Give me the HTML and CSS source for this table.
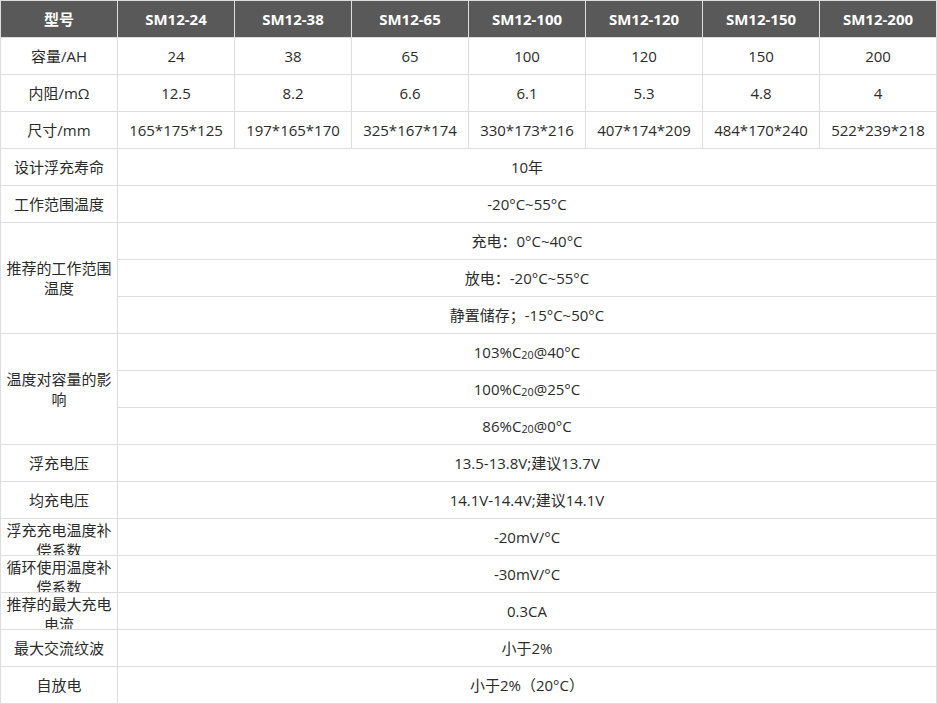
FILE: index.html
```html
<!DOCTYPE html>
<html lang="zh-CN">
<head>
<meta charset="utf-8">
<title>SM12 参数表</title>
<link rel="stylesheet" href="styles.css">
</head>
<body>
<table class="spec">
  <colgroup>
    <col class="c"><col class="c"><col class="c"><col class="c"><col class="c"><col class="c"><col class="c"><col class="c">
  </colgroup>
  <thead>
    <tr class="head">
      <th>型号</th><th>SM12-24</th><th>SM12-38</th><th>SM12-65</th><th>SM12-100</th><th>SM12-120</th><th>SM12-150</th><th>SM12-200</th>
    </tr>
  </thead>
  <tbody>
    <tr><td>容量/AH</td><td>24</td><td>38</td><td>65</td><td>100</td><td>120</td><td>150</td><td>200</td></tr>
    <tr><td>内阻/mΩ</td><td>12.5</td><td>8.2</td><td>6.6</td><td>6.1</td><td>5.3</td><td>4.8</td><td>4</td></tr>
    <tr><td>尺寸/mm</td><td>165*175*125</td><td>197*165*170</td><td>325*167*174</td><td>330*173*216</td><td>407*174*209</td><td>484*170*240</td><td>522*239*218</td></tr>
    <tr><td>设计浮充寿命</td><td colspan="7">10年</td></tr>
    <tr><td>工作范围温度</td><td colspan="7">-20°C~55°C</td></tr>
    <tr><td rowspan="3" class="wrap">推荐的工作范围温度</td><td colspan="7">充电：0°C~40°C</td></tr>
    <tr><td colspan="7">放电：-20°C~55°C</td></tr>
    <tr><td colspan="7">静置储存；-15°C~50°C</td></tr>
    <tr><td rowspan="3" class="wrap">温度对容量的影响</td><td colspan="7">103%C<sub>20</sub>@40°C</td></tr>
    <tr><td colspan="7">100%C<sub>20</sub>@25°C</td></tr>
    <tr><td colspan="7">86%C<sub>20</sub>@0°C</td></tr>
    <tr><td>浮充电压</td><td colspan="7">13.5-13.8V;建议13.7V</td></tr>
    <tr><td>均充电压</td><td colspan="7">14.1V-14.4V;建议14.1V</td></tr>
    <tr><td class="cut"><div class="clip">浮充充电温度补偿系数</div></td><td colspan="7">-20mV/°C</td></tr>
    <tr><td class="cut"><div class="clip">循环使用温度补偿系数</div></td><td colspan="7">-30mV/°C</td></tr>
    <tr><td class="cut"><div class="clip">推荐的最大充电电流</div></td><td colspan="7">0.3CA</td></tr>
    <tr><td>最大交流纹波</td><td colspan="7">小于2%</td></tr>
    <tr><td>自放电</td><td colspan="7">小于2%（20°C）</td></tr>
  </tbody>
</table>
</body>
</html>
```

FILE: styles.css
```css
html, body {
  margin: 0;
  padding: 0;
  background: #fff;
}

.spec {
  border-collapse: collapse;
  table-layout: fixed;
  width: 937px;
  font-family: "Open Sans", "Noto Sans CJK SC", sans-serif;
  font-size: 15px;
  line-height: 20px;
  color: #2b2b2b;
}

.spec .c {
  width: 117px;
}

.spec th,
.spec td {
  border: 1px solid #dddddd;
  height: 36px;
  padding: 0 3px 1px;
  text-align: center;
  vertical-align: middle;
  box-sizing: border-box;
}

.spec tr {
  height: 37px;
}

.head th {
  background: #595959;
  color: #fff;
  font-weight: 700;
}

.spec td.cut {
  vertical-align: top;
  padding-top: 1px;
  padding-bottom: 0;
}

.clip {
  height: 35px;
  overflow: hidden;
}

.spec sub {
  font-size: 0.72em;
  line-height: 0;
  vertical-align: -1px;
}
```
